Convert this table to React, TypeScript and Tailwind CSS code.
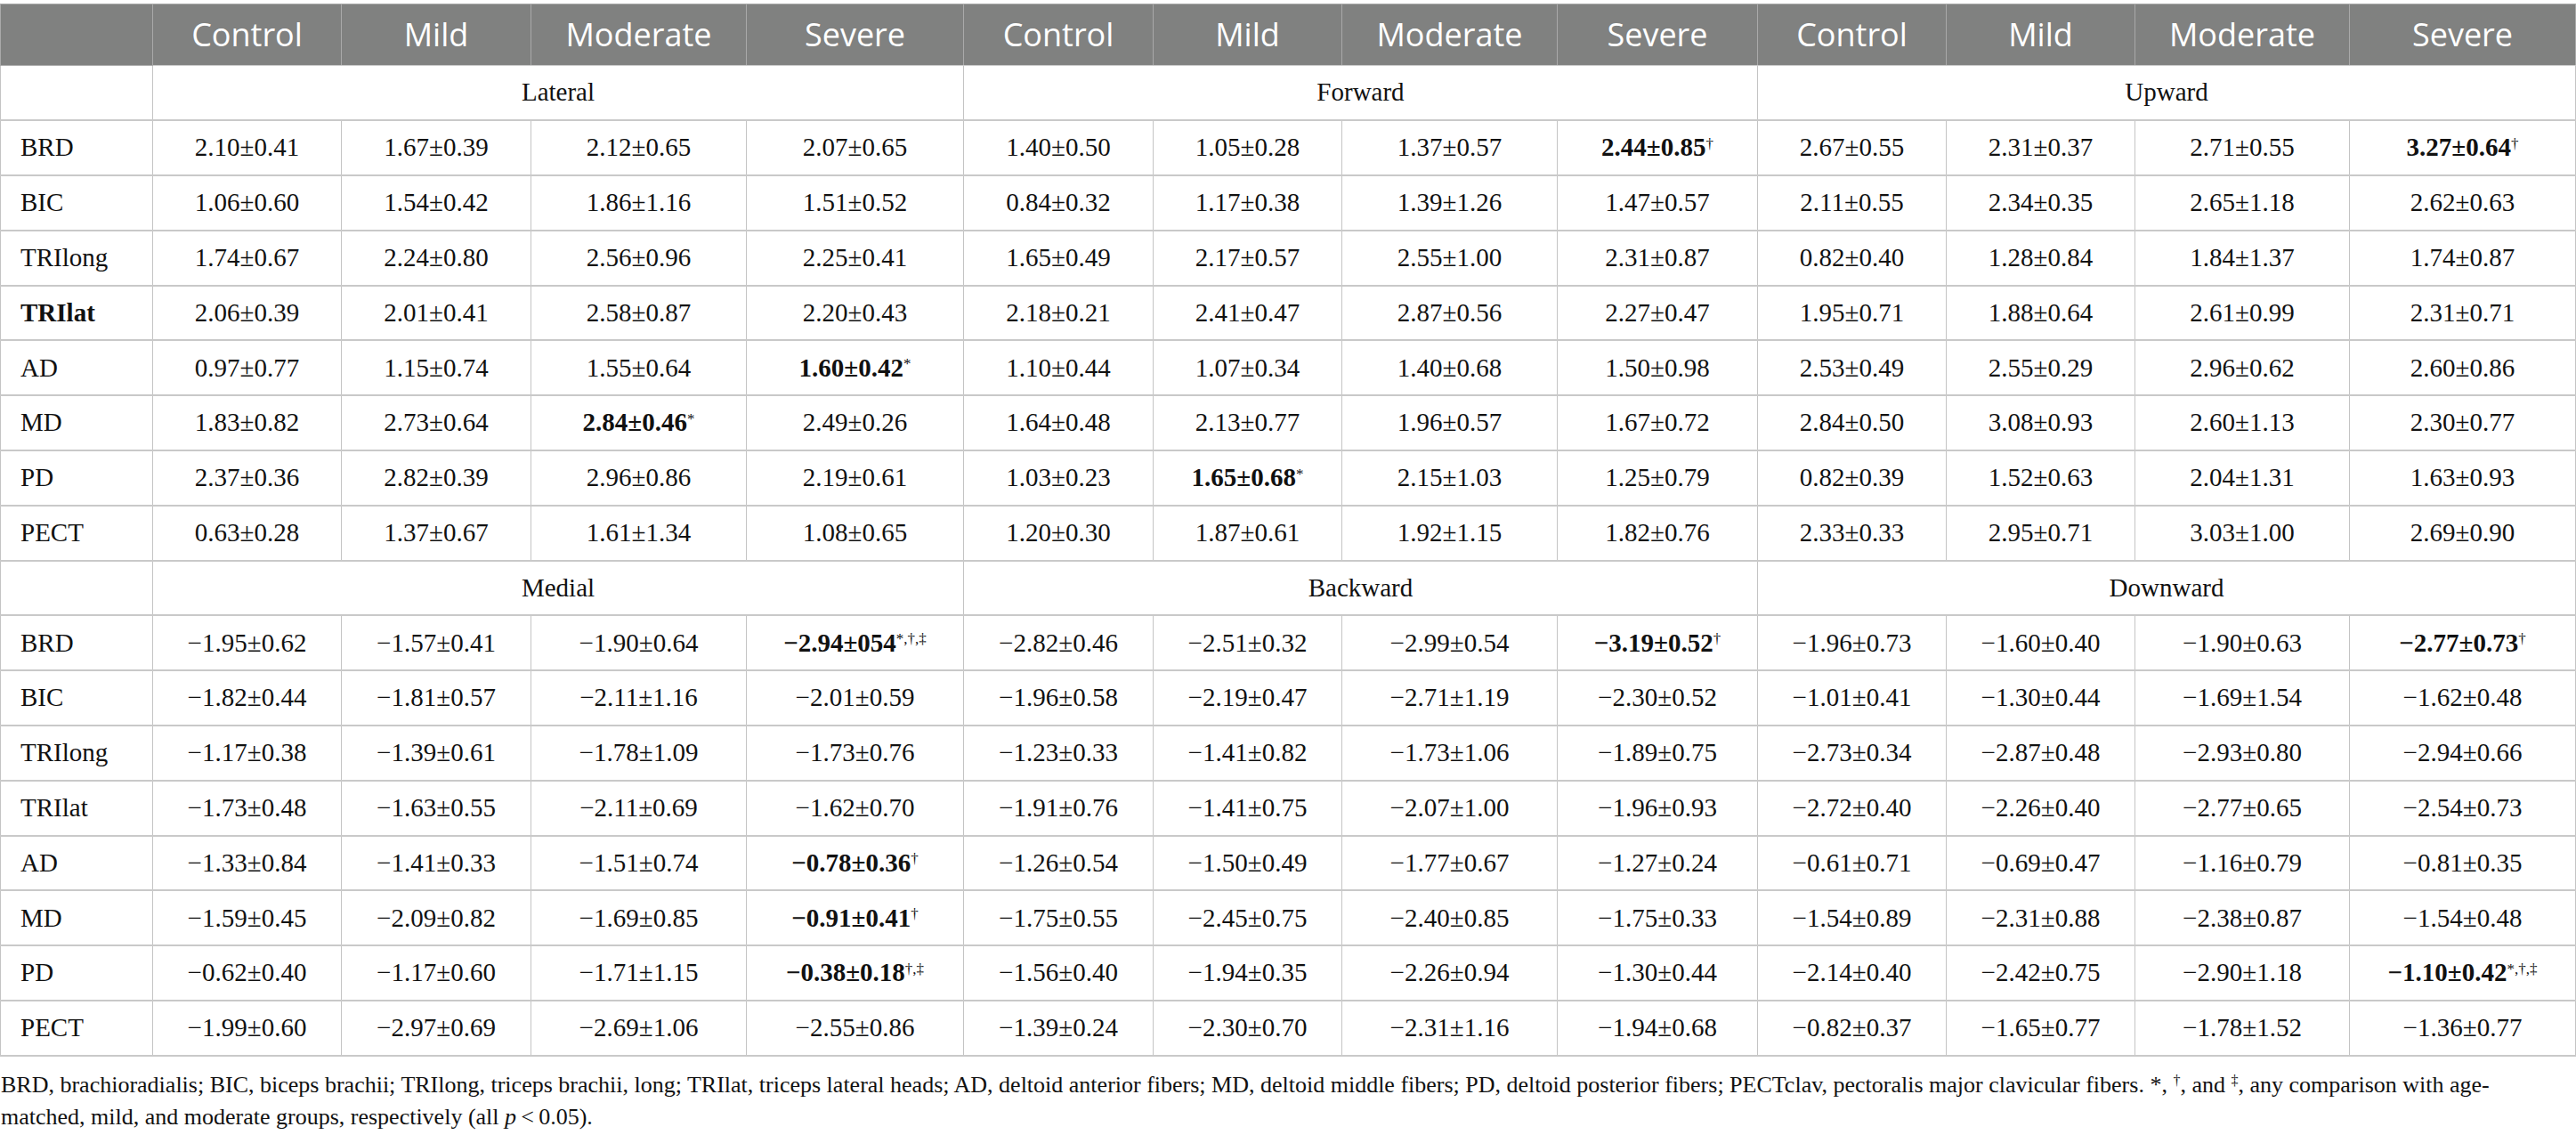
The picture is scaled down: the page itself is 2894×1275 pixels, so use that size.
import React from 'react';

const groups = ['Control', 'Mild', 'Moderate', 'Severe'];

// "b:" prefix = bold value, "^" separates the significance marks
const upper: [string, string[]][] = [
  ['BRD', ['2.10±0.41', '1.67±0.39', '2.12±0.65', '2.07±0.65', '1.40±0.50', '1.05±0.28', '1.37±0.57', 'b:2.44±0.85^†', '2.67±0.55', '2.31±0.37', '2.71±0.55', 'b:3.27±0.64^†']],
  ['BIC', ['1.06±0.60', '1.54±0.42', '1.86±1.16', '1.51±0.52', '0.84±0.32', '1.17±0.38', '1.39±1.26', '1.47±0.57', '2.11±0.55', '2.34±0.35', '2.65±1.18', '2.62±0.63']],
  ['TRIlong', ['1.74±0.67', '2.24±0.80', '2.56±0.96', '2.25±0.41', '1.65±0.49', '2.17±0.57', '2.55±1.00', '2.31±0.87', '0.82±0.40', '1.28±0.84', '1.84±1.37', '1.74±0.87']],
  ['b:TRIlat', ['2.06±0.39', '2.01±0.41', '2.58±0.87', '2.20±0.43', '2.18±0.21', '2.41±0.47', '2.87±0.56', '2.27±0.47', '1.95±0.71', '1.88±0.64', '2.61±0.99', '2.31±0.71']],
  ['AD', ['0.97±0.77', '1.15±0.74', '1.55±0.64', 'b:1.60±0.42^*', '1.10±0.44', '1.07±0.34', '1.40±0.68', '1.50±0.98', '2.53±0.49', '2.55±0.29', '2.96±0.62', '2.60±0.86']],
  ['MD', ['1.83±0.82', '2.73±0.64', 'b:2.84±0.46^*', '2.49±0.26', '1.64±0.48', '2.13±0.77', '1.96±0.57', '1.67±0.72', '2.84±0.50', '3.08±0.93', '2.60±1.13', '2.30±0.77']],
  ['PD', ['2.37±0.36', '2.82±0.39', '2.96±0.86', '2.19±0.61', '1.03±0.23', 'b:1.65±0.68^*', '2.15±1.03', '1.25±0.79', '0.82±0.39', '1.52±0.63', '2.04±1.31', '1.63±0.93']],
  ['PECT', ['0.63±0.28', '1.37±0.67', '1.61±1.34', '1.08±0.65', '1.20±0.30', '1.87±0.61', '1.92±1.15', '1.82±0.76', '2.33±0.33', '2.95±0.71', '3.03±1.00', '2.69±0.90']],
];

const lower: [string, string[]][] = [
  ['BRD', ['−1.95±0.62', '−1.57±0.41', '−1.90±0.64', 'b:−2.94±054^*,†,‡', '−2.82±0.46', '−2.51±0.32', '−2.99±0.54', 'b:−3.19±0.52^†', '−1.96±0.73', '−1.60±0.40', '−1.90±0.63', 'b:−2.77±0.73^†']],
  ['BIC', ['−1.82±0.44', '−1.81±0.57', '−2.11±1.16', '−2.01±0.59', '−1.96±0.58', '−2.19±0.47', '−2.71±1.19', '−2.30±0.52', '−1.01±0.41', '−1.30±0.44', '−1.69±1.54', '−1.62±0.48']],
  ['TRIlong', ['−1.17±0.38', '−1.39±0.61', '−1.78±1.09', '−1.73±0.76', '−1.23±0.33', '−1.41±0.82', '−1.73±1.06', '−1.89±0.75', '−2.73±0.34', '−2.87±0.48', '−2.93±0.80', '−2.94±0.66']],
  ['TRIlat', ['−1.73±0.48', '−1.63±0.55', '−2.11±0.69', '−1.62±0.70', '−1.91±0.76', '−1.41±0.75', '−2.07±1.00', '−1.96±0.93', '−2.72±0.40', '−2.26±0.40', '−2.77±0.65', '−2.54±0.73']],
  ['AD', ['−1.33±0.84', '−1.41±0.33', '−1.51±0.74', 'b:−0.78±0.36^†', '−1.26±0.54', '−1.50±0.49', '−1.77±0.67', '−1.27±0.24', '−0.61±0.71', '−0.69±0.47', '−1.16±0.79', '−0.81±0.35']],
  ['MD', ['−1.59±0.45', '−2.09±0.82', '−1.69±0.85', 'b:−0.91±0.41^†', '−1.75±0.55', '−2.45±0.75', '−2.40±0.85', '−1.75±0.33', '−1.54±0.89', '−2.31±0.88', '−2.38±0.87', '−1.54±0.48']],
  ['PD', ['−0.62±0.40', '−1.17±0.60', '−1.71±1.15', 'b:−0.38±0.18^†,‡', '−1.56±0.40', '−1.94±0.35', '−2.26±0.94', '−1.30±0.44', '−2.14±0.40', '−2.42±0.75', '−2.90±1.18', 'b:−1.10±0.42^*,†,‡']],
  ['PECT', ['−1.99±0.60', '−2.97±0.69', '−2.69±1.06', '−2.55±0.86', '−1.39±0.24', '−2.30±0.70', '−2.31±1.16', '−1.94±0.68', '−0.82±0.37', '−1.65±0.77', '−1.78±1.52', '−1.36±0.77']],
];

const widths = ['w-[171px]', 'w-[212px]', 'w-[213px]', 'w-[242px]', 'w-[244px]', 'w-[213px]', 'w-[212px]', 'w-[242px]', 'w-[225px]', 'w-[212px]', 'w-[212px]', 'w-[241px]', 'w-[254px]'];

const cellBorder = 'border-x border-x-[#c4c4c4] border-b-2 border-b-[#c9c9c9]';

const Value = ({ raw }: { raw: string }) => {
  const bold = raw.startsWith('b:');
  const [val, marks] = (bold ? raw.slice(2) : raw).split('^');
  return (
    <span>
      <span className={bold ? 'font-bold' : ''}>{val}</span>
      {marks && <sup className="text-[17px] font-normal">{marks}</sup>}
    </span>
  );
};

const SectionRow = ({ labels }: { labels: string[] }) => (
  <tr className="h-[61.8px]">
    <td className={cellBorder}></td>
    {labels.map(l => (
      <td key={l} colSpan={4} className={`${cellBorder} text-center`}>{l}</td>
    ))}
  </tr>
);

const DataRows = ({ rows }: { rows: [string, string[]][] }) => (
  <>
    {rows.map(([label, vals], i) => {
      const bold = label.startsWith('b:');
      return (
        <tr key={i} className="h-[61.8px]">
          <td className={`${cellBorder} pl-[22px] text-left ${bold ? 'font-bold' : ''}`}>{bold ? label.slice(2) : label}</td>
          {vals.map((v, j) => (
            <td key={j} className={`${cellBorder} text-center whitespace-nowrap`}><Value raw={v} /></td>
          ))}
        </tr>
      );
    })}
  </>
);

export default function App() {
  return (
    <div className="w-[2894px] bg-white pt-[4px] text-[#111] [font-family:Liberation_Serif,Times_New_Roman,serif]">
      <table className="table-fixed w-[2893px] border-collapse text-[29px]">
        <colgroup>
          {widths.map((w, i) => <col key={i} className={w} />)}
        </colgroup>
        <thead>
          <tr className="h-[69px] bg-[#808180] text-white [font-family:Open_Sans,sans-serif] text-[36px]">
            <th className="border border-[#a9a9a9] font-normal"></th>
            {[0, 1, 2].flatMap(k => groups.map(g => (
              <th key={`${k}-${g}`} className="border border-[#a9a9a9] border-b-[#c9c9c9] font-normal">{g}</th>
            )))}
          </tr>
        </thead>
        <tbody>
          <SectionRow labels={['Lateral', 'Forward', 'Upward']} />
          <DataRows rows={upper} />
          <SectionRow labels={['Medial', 'Backward', 'Downward']} />
          <DataRows rows={lower} />
        </tbody>
      </table>
      <p className="text-[26px] leading-[36px] mt-[14px] pl-[1px] whitespace-nowrap">
        BRD, brachioradialis; BIC, biceps brachii; TRIlong, triceps brachii, long; TRIlat, triceps lateral heads; AD, deltoid anterior fibers; MD, deltoid middle fibers; PD, deltoid posterior fibers; PECTclav, pectoralis major clavicular fibers. *, <sup className="text-[16px]">†</sup>, and <sup className="text-[16px]">‡</sup>, any comparison with age-
        <br />
        matched, mild, and moderate groups, respectively (all <i>p</i>{'\u2009'}&lt;{'\u2009'}0.05).
      </p>
    </div>
  );
}
